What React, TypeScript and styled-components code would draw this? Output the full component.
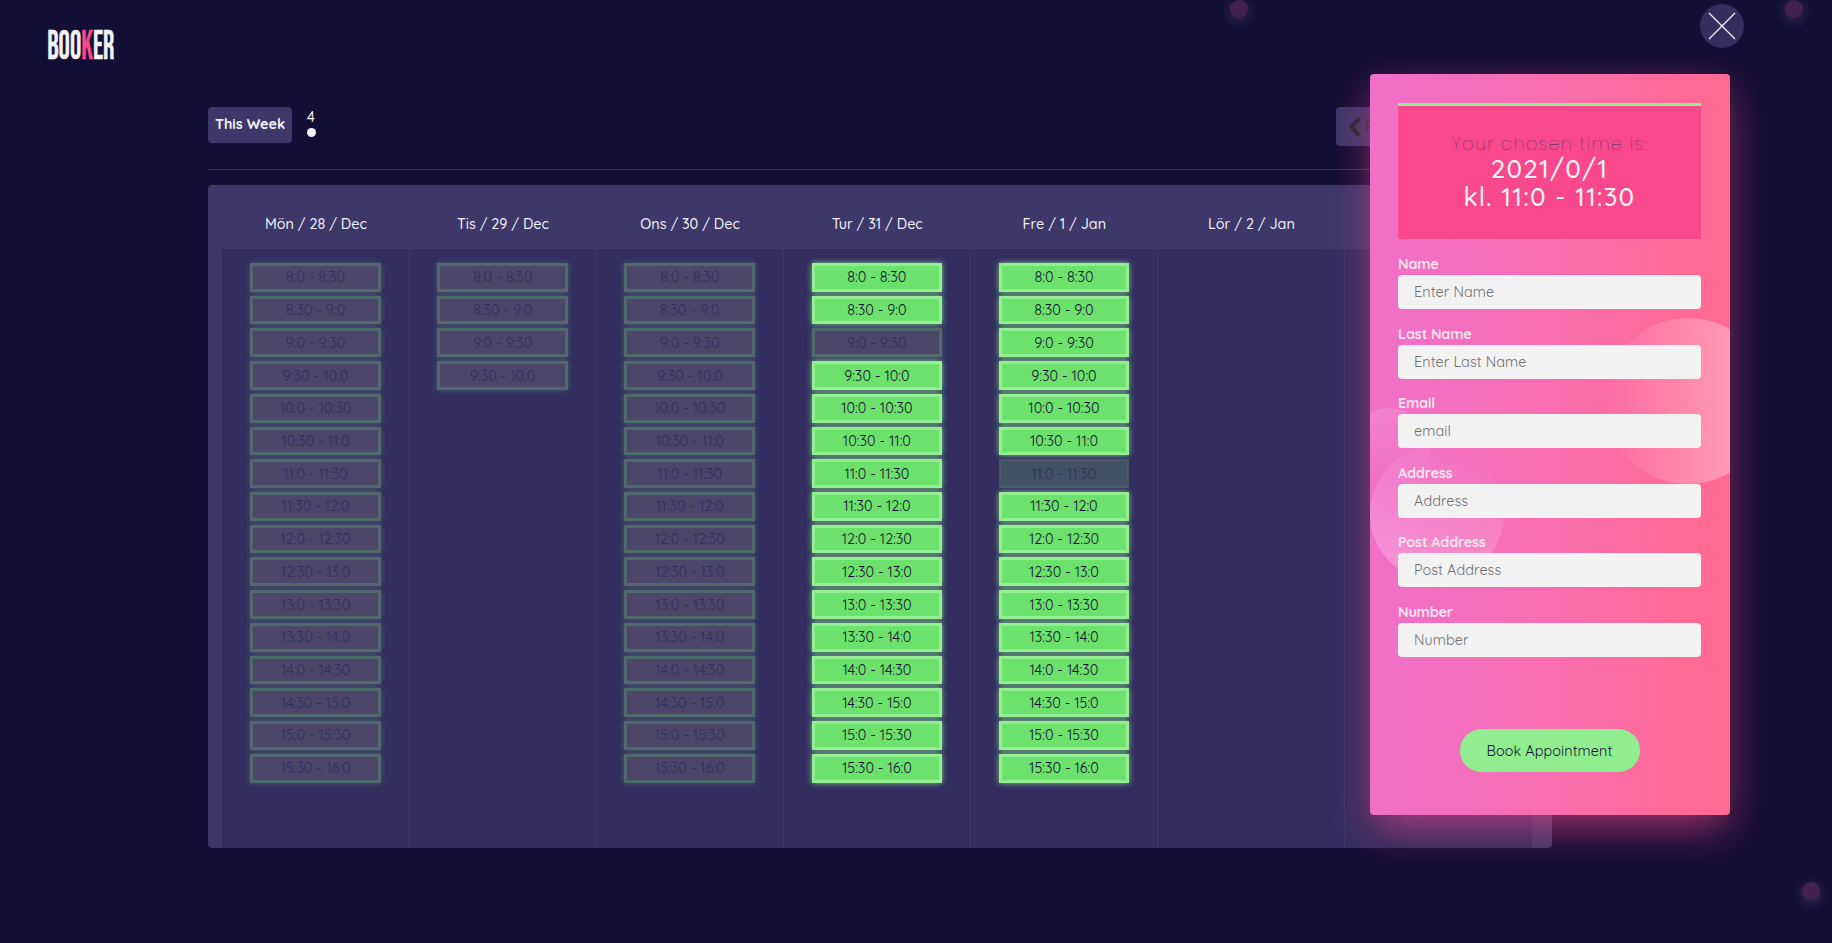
import React from "react";
import styled, { createGlobalStyle, css } from "styled-components";

const GlobalStyle = createGlobalStyle`
  *, *::before, *::after { box-sizing: border-box; }
  body {
    margin: 0;
    background: #130e33;
    color: #f2f2f2;
    font-family: Quicksand, Lato, "Open Sans", sans-serif;
    overflow: hidden;
  }
`;

const Page = styled.div`
  position: relative;
  height: 943px;
  padding: 24px 0 0;
  overflow: hidden;
`;

const LogoBar = styled.header`
  height: 83px;
  padding-left: 44px;
  svg { display: block; overflow: visible; }
`;

const Calendar = styled.main`
  width: 1344px;
  margin-left: 208px;
`;

const Toolbar = styled.div`
  display: flex;
  align-items: flex-start;
  height: 63px;
  border-bottom: 1px solid #332d60;
`;

const ThisWeek = styled.button`
  width: 84px;
  height: 36px;
  padding: 0 0 2px;
  border: 0;
  border-radius: 4px;
  background: #3d376a;
  color: #f2f2f2;
  font: 700 14.4px Quicksand, Lato, sans-serif;
  letter-spacing: -0.02px;
  white-space: nowrap;
`;

const WeekMarker = styled.div`
  display: flex;
  flex-direction: column;
  align-items: center;
  gap: 2px;
  width: 10px;
  margin: 2px 0 0 14px;
  font-size: 14.4px;
  font-weight: 500;
  line-height: 17px;
`;

const Dot = styled.span`
  width: 9px;
  height: 9px;
  border-radius: 50%;
  background: #f2f2f2;
`;

const PrevButton = styled.button`
  display: flex;
  align-items: center;
  gap: 4px;
  width: 90px;
  height: 39px;
  margin-left: auto;
  margin-right: 126px;
  padding: 0 12px;
  border: 0;
  border-radius: 4px;
  background: #3d376a;
  color: #2b2430;
  font: 400 14.4px Quicksand, Lato, sans-serif;
`;

const Week = styled.section`
  display: flex;
  height: 663px;
  margin-top: 15px;
  padding: 0 20.4px 0 13.9px;
  border-radius: 4px;
  background: #3d376a;
`;

const Day = styled.div`
  display: flex;
  flex-direction: column;
  flex: 0 0 187.1px;
`;

const DayName = styled.h3`
  height: 64px;
  margin: 0;
  padding: 14px 0 0 1px;
  font-size: 14.4px;
  font-weight: 500;
  line-height: 50px;
  letter-spacing: -0.03px;
  text-align: center;
`;

const Slots = styled.div`
  display: flex;
  flex-direction: column;
  flex: 1;
  gap: 4px;
  padding: 14px 28.1px 0 27.4px;
  border-left: 1px solid #3b3568;
  background: #332d60;
  ${Day}:first-child & { border-left-color: #332d60; }
`;

type SlotState = "free" | "taken" | "chosen";

const slotLook = {
  free: css`
    border-color: #93f092;
    background: #6ce16c;
    color: #130e33;
    box-shadow: 0 0 6px rgba(144, 238, 144, 0.8);
  `,
  taken: css`
    border-color: #50696f;
    background: #4c4668;
    color: #332d60;
    box-shadow: 0 0 6px rgba(144, 238, 144, 0.25);
  `,
  chosen: css`
    border-color: #435766;
    background: #405264;
    color: #332d60;
  `,
};

const Slot = styled.button<{ $state: SlotState }>`
  height: 28.73px;
  padding: 0;
  border: 3px solid;
  border-radius: 0;
  font: 400 14.4px/20px Quicksand, Lato, sans-serif;
  ${(p) => slotLook[p.$state]}
`;

const Bubble = styled.i<{ $x: number; $y: number }>`
  position: absolute;
  left: ${(p) => p.$x}px;
  top: ${(p) => p.$y}px;
  width: 18px;
  height: 18px;
  border-radius: 50%;
  background: #43234d;
  box-shadow: 0 3px 14px rgba(242, 242, 242, 0.18);
`;

const CloseButton = styled.button`
  position: absolute;
  left: 1699.5px;
  top: 4px;
  width: 44px;
  height: 44px;
  padding: 0;
  border: 0;
  border-radius: 50%;
  background: #332d60;
  svg { display: block; }
`;

const Modal = styled.aside`
  position: absolute;
  left: 1370px;
  top: 74px;
  width: 360px;
  height: 741px;
  border-radius: 4px;
  background: linear-gradient(90deg, #f070c9, #f56fb8 35%, #ff6a98 85%, #ff6a93);
  box-shadow:
    0 15px 42px rgba(249, 73, 140, 0.48),
    0 22px 30px -20px rgba(249, 73, 140, 0.25);
`;

const Decor = styled.div`
  position: absolute;
  inset: 0;
  overflow: hidden;
`;

const Circle = styled.i<{ $x: number; $y: number; $r: number; $fill: string }>`
  position: absolute;
  left: ${(p) => p.$x - p.$r}px;
  top: ${(p) => p.$y - p.$r}px;
  width: ${(p) => p.$r * 2}px;
  height: ${(p) => p.$r * 2}px;
  border-radius: 50%;
  background: ${(p) => p.$fill};
`;

const Form = styled.form`
  position: relative;
  display: flex;
  flex-direction: column;
  height: 100%;
  padding: 29px 29px 43px 28px;
`;

const Chosen = styled.div`
  height: 136px;
  margin-bottom: 14px;
  padding-top: 26px;
  border-top: 3px solid #90ee90;
  background: #f9498c;
  text-align: center;
`;

const ChosenHint = styled.p`
  margin: 0 0 -1px;
  color: #332d60;
  font: 200 18px/24px Poppins, Lato, sans-serif;
  letter-spacing: 1.2px;
`;

const ChosenTime = styled.p`
  margin: 0;
  font-size: 26px;
  font-weight: 500;
  line-height: 28px;
  letter-spacing: 1.2px;
`;

const Field = styled.label`
  display: block;
  height: 69.6px;
  color: #f6e2ee;
  font-size: 14.4px;
  font-weight: 700;
  line-height: 22px;
  letter-spacing: -0.2px;
`;

const Input = styled.input`
  display: block;
  width: 303px;
  height: 34px;
  padding: 0 16px;
  border: 0;
  border-radius: 4px;
  background: #f2f2f2;
  font: 400 14.4px Quicksand, Lato, sans-serif;
  letter-spacing: 0.08px;
  &::placeholder { color: #6e6e6e; opacity: 1; }
`;

const Submit = styled.button`
  align-self: center;
  width: 180px;
  height: 43px;
  margin-top: auto;
  padding: 0;
  border: 0;
  border-radius: 22px;
  background: #90ee90;
  color: #130e33;
  font: 400 14.4px Quicksand, Lato, sans-serif;
  letter-spacing: 0.08px;
`;

const times = Array.from({ length: 16 }, (_, i) => {
  const at = (n: number) => `${8 + Math.floor(n / 2)}:${n % 2 ? 30 : 0}`;
  return `${at(i)} - ${at(i + 1)}`;
});

const week: { name: string; count: number; state: SlotState; except?: Record<number, SlotState> }[] = [
  { name: "Mön / 28 / Dec", count: 16, state: "taken" },
  { name: "Tis / 29 / Dec", count: 4, state: "taken" },
  { name: "Ons / 30 / Dec", count: 16, state: "taken" },
  { name: "Tur / 31 / Dec", count: 16, state: "free", except: { 2: "taken" } },
  { name: "Fre / 1 / Jan", count: 16, state: "free", except: { 6: "chosen" } },
  { name: "Lör / 2 / Jan", count: 0, state: "free" },
  { name: "Sön / 3 / Jan", count: 0, state: "free" },
];

const fields = [
  ["Name", "Enter Name"],
  ["Last Name", "Enter Last Name"],
  ["Email", "email"],
  ["Address", "Address"],
  ["Post Address", "Post Address"],
  ["Number", "Number"],
];

function Logo() {
  return (
    <svg width="76" height="42" viewBox="0 0 76 42">
      <text
        x="3.2"
        y="34.8"
        fill="#f2f2f2"
        stroke="#f2f2f2"
        strokeWidth="0.4"
        fontFamily="'Bebas Neue', Roboto, sans-serif"
        fontWeight="400"
        fontSize="40.5"
        textLength="67.3"
        lengthAdjust="spacingAndGlyphs"
      >
        BOO<tspan fill="#f9498c" stroke="#f9498c">K</tspan>ER
      </text>
    </svg>
  );
}

export default function App() {
  return (
    <Page>
      <GlobalStyle />
      <LogoBar><Logo /></LogoBar>
      <Bubble $x={1230} $y={0} />
      <Bubble $x={1785} $y={0} />
      <Bubble $x={1802} $y={882} />
      <Calendar>
        <Toolbar>
          <ThisWeek>This Week</ThisWeek>
          <WeekMarker>4<Dot /></WeekMarker>
          <PrevButton>
            <svg width="13" height="20" viewBox="0 0 13 20" fill="none" stroke="currentColor" strokeWidth="3.8">
              <path d="M11 1.2 L3.6 10 L11 18.8" />
            </svg>
            Prev
          </PrevButton>
        </Toolbar>
        <Week>
          {week.map((d) => (
            <Day key={d.name}>
              <DayName>{d.name}</DayName>
              <Slots>
                {times.slice(0, d.count).map((t, i) => (
                  <Slot key={t} $state={d.except?.[i] ?? d.state}>{t}</Slot>
                ))}
              </Slots>
            </Day>
          ))}
        </Week>
      </Calendar>
      <CloseButton aria-label="Close">
        <svg width="44" height="44" viewBox="0 0 44 44" stroke="#f2f2f2" strokeWidth="1.3">
          <path d="M9 9 L35 35 M35 9 L9 35" />
        </svg>
      </CloseButton>
      <Modal>
        <Decor>
          <Circle $x={318} $y={327} $r={83} $fill="linear-gradient(90deg, rgba(255,255,255,0), rgba(255,255,255,0.42))" />
          <Circle $x={19} $y={375} $r={41} $fill="linear-gradient(180deg, rgba(255,255,255,0.12), rgba(255,255,255,0) 90%)" />
          <Circle $x={67} $y={440} $r={67} $fill="linear-gradient(20deg, rgba(255,255,255,0.28), rgba(255,255,255,0.12) 55%, rgba(255,255,255,0) 90%)" />
        </Decor>
        <Form>
          <Chosen>
            <ChosenHint>Your chosen time is:</ChosenHint>
            <ChosenTime>2021/0/1</ChosenTime>
            <ChosenTime>kl. 11:0 - 11:30</ChosenTime>
          </Chosen>
          {fields.map(([label, hint]) => (
            <Field key={label}>
              {label}
              <Input placeholder={hint} />
            </Field>
          ))}
          <Submit type="button">Book Appointment</Submit>
        </Form>
      </Modal>
    </Page>
  );
}
